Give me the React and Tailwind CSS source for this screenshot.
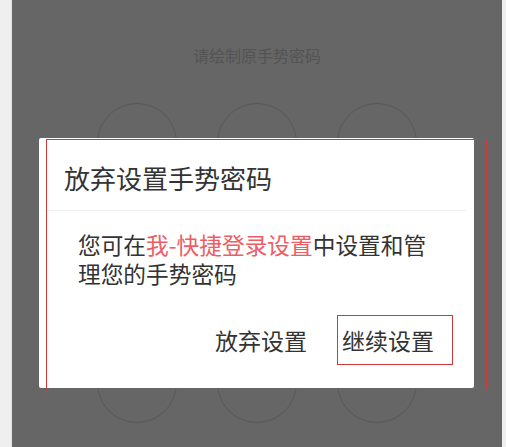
import React from "react";

const cjk = { fontFamily: '"Noto Sans CJK SC", "Noto Sans", sans-serif' };

const GestureDot = () => (
    <div className="w-[80px] h-[80px] rounded-full border border-[#585858]" />
);

const App = () => {
    const dots = Array.from({ length: 9 });

    return (
        <div className="w-[506px] h-[447px] flex overflow-hidden" style={cjk}>
            <div className="w-[12px] h-full bg-[#efefef] border-r border-[#e2e2e2]" />

            <div className="relative flex-1 h-full bg-[#666666] flex flex-col items-center">
                <p className="mt-[44px] text-[16px] leading-[22px] text-[#545454]">请绘制原手势密码</p>
                <div className="mt-[37px] grid grid-cols-3 gap-[40px]">
                    {dots.map((_, i) => (
                        <GestureDot key={i} />
                    ))}
                </div>

                {/* dialog */}
                <div className="absolute left-[27px] top-[138px] w-[435px] h-[250px] bg-white rounded-[2px] flex flex-col">
                    <div className="pl-[25px] pt-[22px] pb-[14px]">
                        <h2 className="text-[26px] leading-[36px] text-[#333333]">放弃设置手势密码</h2>
                    </div>
                    <div className="mx-[8px] h-px bg-[#f0f0f0]" />
                    <p className="pl-[39px] pr-[30px] pt-[19px] text-[22.7px] leading-[29px] text-[#333333]">
                        您可在<span className="text-[#ee5c64]">我-快捷登录设置</span>中设置和管理您的手势密码
                    </p>
                    <div className="mt-auto mb-[23px] mr-[21px] flex items-center justify-end">
                        <button className="text-[23px] leading-[50px] text-[#333333] mr-[30px]">放弃设置</button>
                        <button className="h-[50px] w-[116px] pl-[4px] text-left border border-[#d23a3a] text-[23px] leading-[48px] text-[#333333]">
                            继续设置
                        </button>
                    </div>
                </div>

                {/* annotation outline */}
                <div className="absolute left-[34px] top-[139px] w-[441px] h-[251px] border border-[#d03a3a] pointer-events-none" />
            </div>

            <div className="w-[4px] h-full bg-[#efefef]" />
        </div>
    );
};

export default App;
